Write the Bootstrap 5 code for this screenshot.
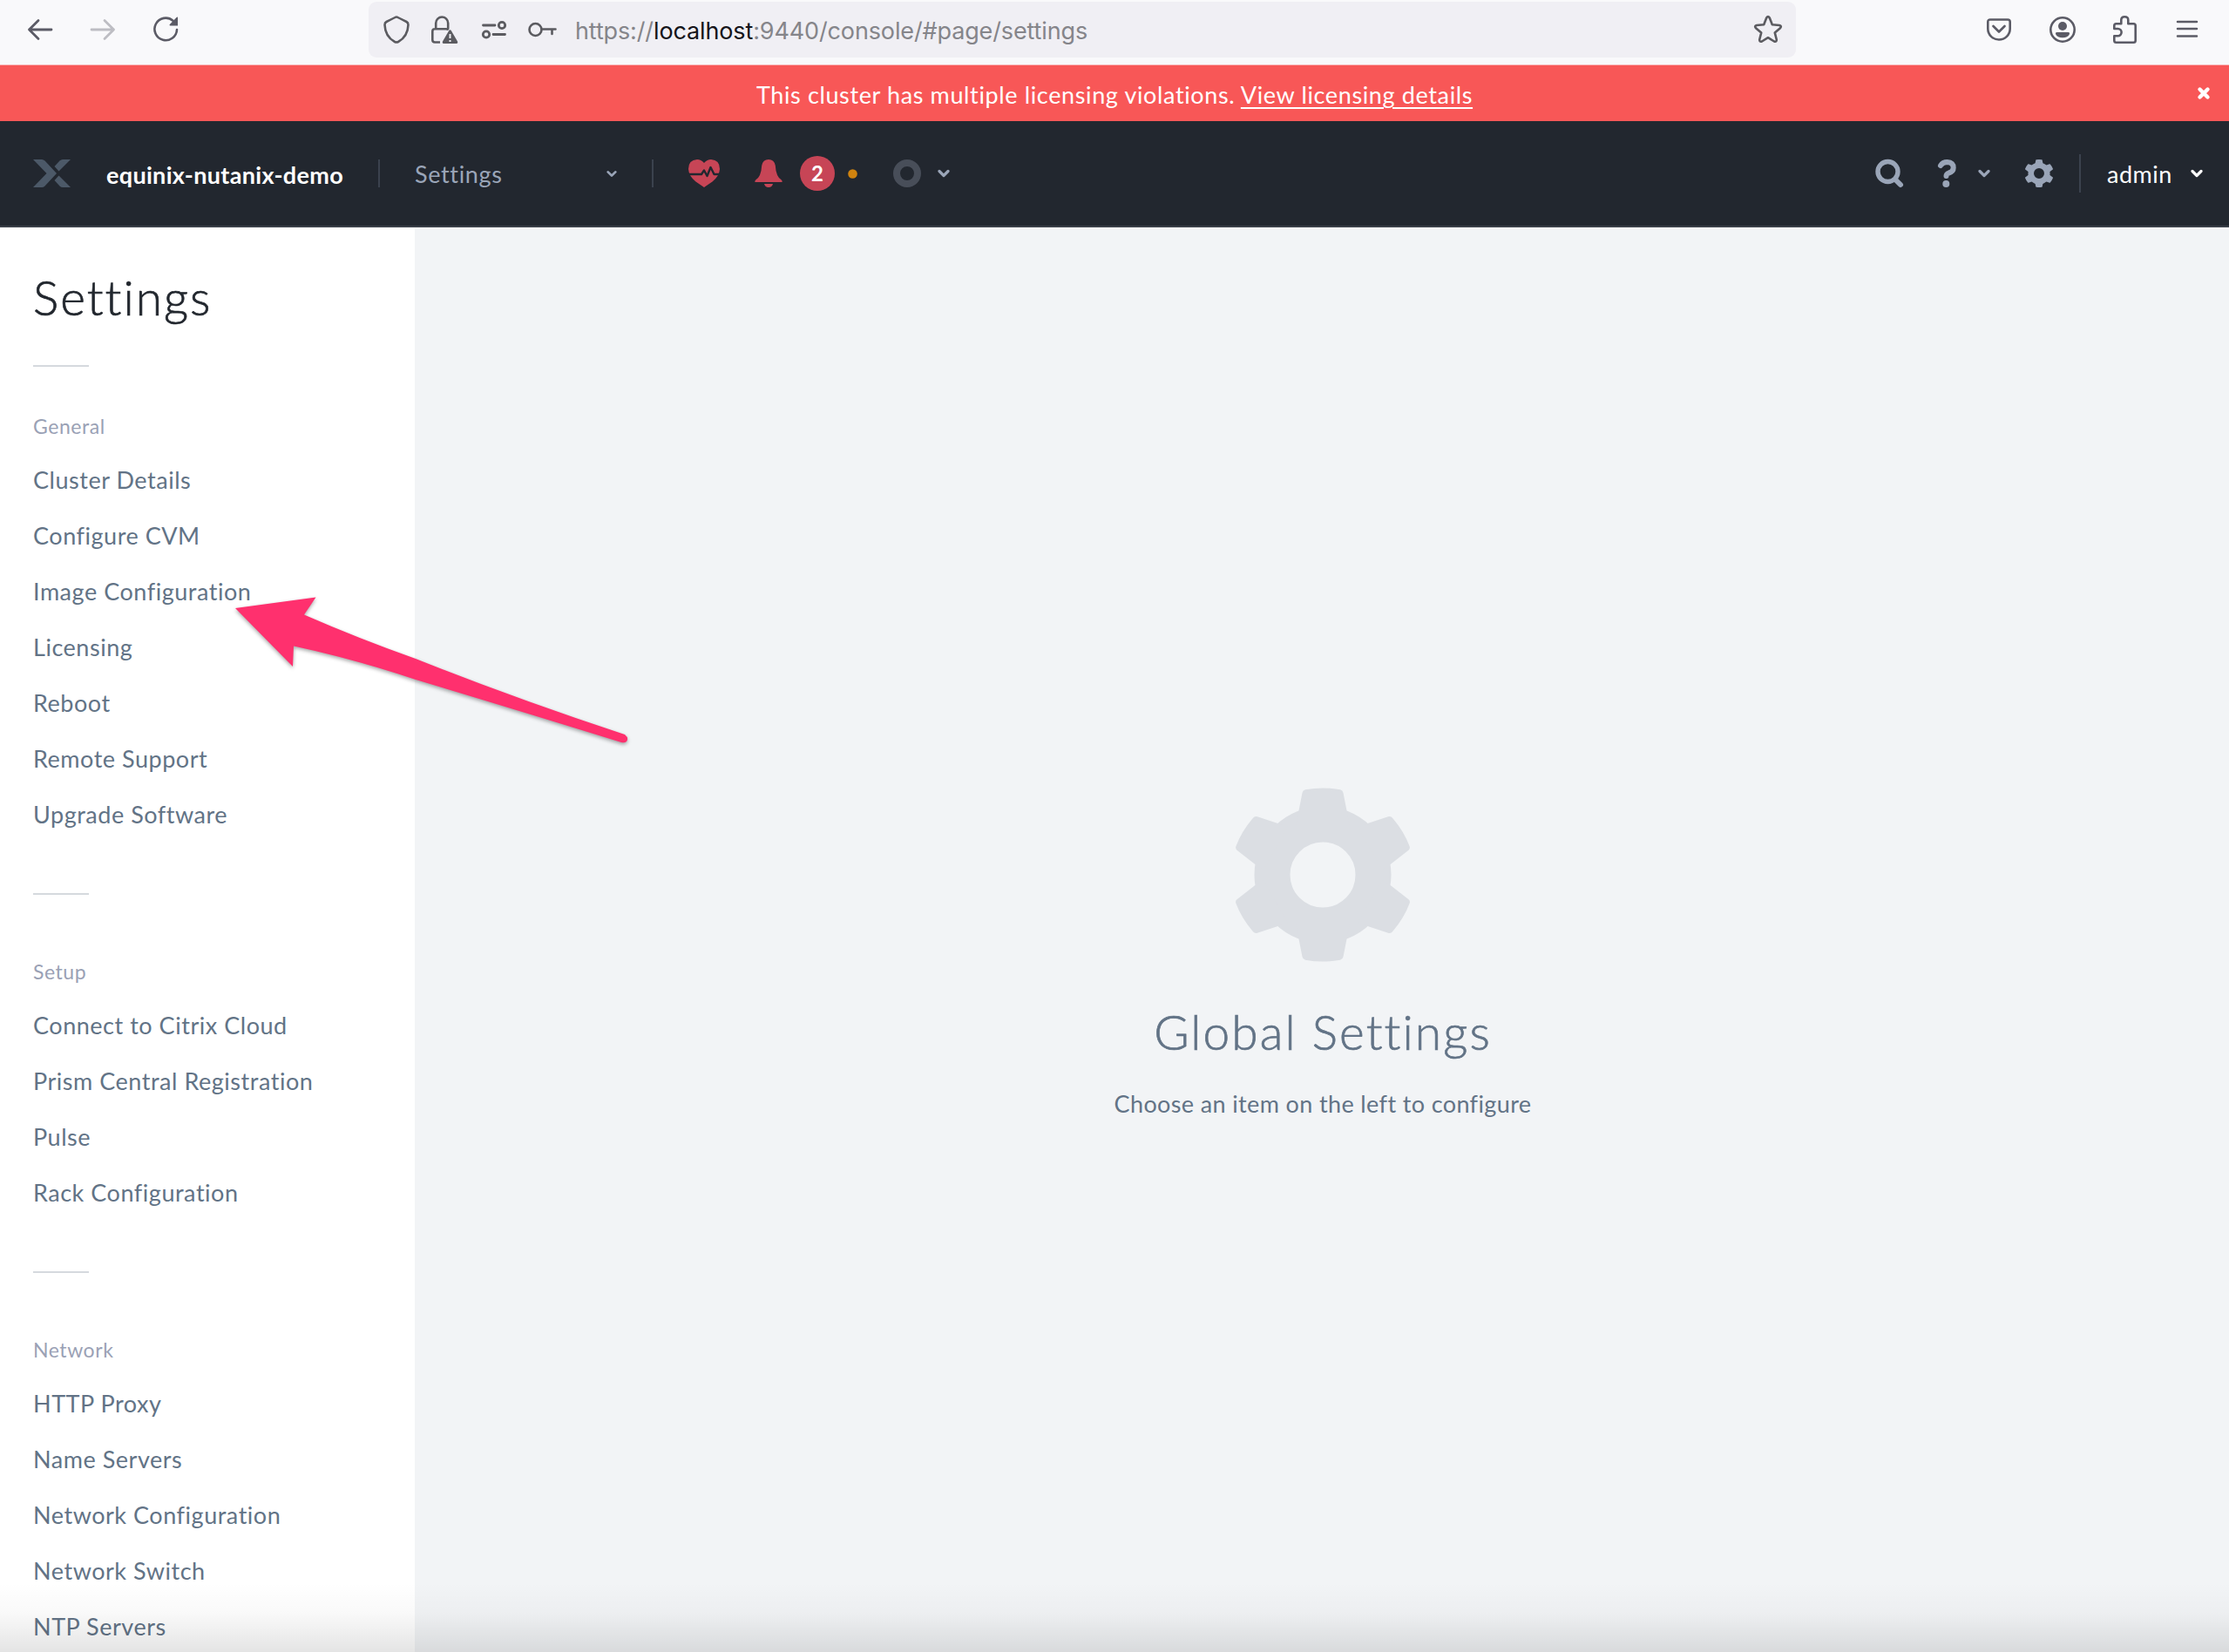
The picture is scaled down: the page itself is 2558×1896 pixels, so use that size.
<!DOCTYPE html>
<html lang="en">
<head>
<meta charset="utf-8">
<meta name="viewport" content="width=device-width, initial-scale=1">
<title>Settings</title>
<link href="https://cdn.jsdelivr.net/npm/bootstrap@5.3.0/dist/css/bootstrap.min.css" rel="stylesheet">
<style>
body{font-family:Lato,"Open Sans",sans-serif;font-size:27px;color:#627386;background:#f2f4f6;height:1896px;overflow:hidden}
svg{display:block;flex:none;overflow:visible}
.browser-bar{height:75px;padding:2px 36px 9px 32px;background:#f9f9fb;color:#5b5b66;border-bottom:1px solid #f9b5b7}
.nav-tools{gap:44px;width:391px}
.url-field{width:1638px;height:64px;border-radius:9px;background:#f0eff4;padding:0 16px 0 17px;color:#5b5b60}
.lock-icon{margin-left:25px}
.sliders-icon{margin-left:27px}
.key-icon{margin-left:25px}
.url-text{font-family:Inter,sans-serif;font-size:27px;color:#85858a;line-height:36px;margin-left:21px;letter-spacing:-.13px;padding-top:4px}
.url-text b{font-weight:400;color:#15141a}
.account-icon{margin-left:44px}
.puzzle-icon{margin-left:43px}
.menu-icon{margin-left:46px}
.violation{height:64px;background:#f85757;color:#fff;line-height:60px;letter-spacing:.63px;padding-top:4px}
.violation a{color:#fff;text-decoration:underline;text-decoration-thickness:1.5px;text-underline-offset:4px}
.violation .dismiss{right:22px;top:25px}
.topbar{height:122px;background:#22272f;border-bottom:2px solid #3a3f48;padding:0 30px 0 38px;color:#9aa5b8}
.cluster-name{color:#fff;font-weight:700;margin-left:41px;width:312px;font-size:27px;letter-spacing:.32px;padding-top:4px}
.rule-v{width:2px;height:32px;background:#3b424e;flex:none}
.rule-tall{height:44px;margin-left:30px}
.page-pick{width:220px;margin-left:40px;padding-top:3px;letter-spacing:.65px}
.gap-40{margin-left:40px}
.alert-count{width:40px;height:40px;background:#c74556;color:#fff;font-weight:700;font-size:24px;margin-left:20px}
.dot-icon{margin-left:15px}
.ring-icon{margin-left:41px}
.ring-chev{margin-left:19px}
.help-chev{margin-left:25px}
.user-name{color:#fff;margin-left:30px;width:96px;padding-top:3px;letter-spacing:.5px}
.workspace{height:1635px;border-top:2px solid #fcfcfd}
.side{width:476px;background:#fff;padding:0 38px;margin-top:-2px}
.side h1,.empty-state h2{font-weight:300;font-size:55px;line-height:64px;-webkit-text-stroke:.7px currentColor}
.side h1{color:#22272e;margin:48px 0 46px;letter-spacing:2px}
.rule-h{width:64px;height:2px;background:#d5d9de}
.group-title{font-size:23px;line-height:32px;color:#9aa1b5;letter-spacing:.55px}
.side li{height:64px;line-height:64px;letter-spacing:.53px;white-space:nowrap}
.side ul{margin:14px 0 58px}
.first-title{margin-top:52px}
.later-title{margin-top:72px}
.empty-state{padding:641px 0 0 2px}
.empty-state h2{margin:48px 0 0;letter-spacing:2.1px}
.empty-state p{line-height:36px;margin:33px 0 0;letter-spacing:.37px}
.pointer-arrow{left:0;top:0;filter:drop-shadow(0 2px 2px rgba(0,0,0,.35))}
.edge-fade{left:0;right:0;top:1816px;height:80px;background:linear-gradient(rgba(0,0,0,0),rgba(0,0,0,.025) 45%,rgba(0,0,0,.105))}
</style>
<script src="https://cdn.jsdelivr.net/npm/bootstrap@5.3.0/dist/js/bootstrap.bundle.min.js"></script>
</head>
<body class="position-relative">
<svg width="0" height="0" class="position-absolute">
  <defs>
    <path id="tooth" d="M-31 -56L-23.500 -94Q-23 -97 -20 -97.700Q0 -101.500 20 -97.700Q23 -97 23.500 -94L31 -56Z"/>
    <path id="side-tooth" d="M40 -55L49.300 -58.300L75 -66.700Q78 -67.700 80 -65.300Q93.500 -49.500 99.700 -32.500Q100.500 -30 98.500 -28.300L78 -12.300L68 -6Z"/>
    <symbol id="gear" viewBox="-100 -100 200 200">
      <circle r="58" fill="none" stroke="currentColor" stroke-width="41"/>
      <g fill="currentColor"><use href="#tooth"/><use href="#tooth" transform="scale(1 -1)"/><use href="#side-tooth"/><use href="#side-tooth" transform="scale(-1 1)"/><use href="#side-tooth" transform="scale(1 -1)"/><use href="#side-tooth" transform="scale(-1 -1)"/></g>
    </symbol>
    <symbol id="chev" viewBox="0 0 14 10"><path d="M2 2.500L7 7.500L12 2.500" fill="none" stroke="currentColor" stroke-width="3.200" stroke-linecap="round" stroke-linejoin="round"/></symbol>
  </defs>
</svg>

<header class="browser-bar d-flex align-items-center">
  <div class="nav-tools d-flex align-items-center">
    <svg width="28" height="24" viewBox="0 0 28 24" fill="none" stroke="currentColor" stroke-width="2.800" stroke-linecap="round" stroke-linejoin="round"><path d="M27 12H1.500M12 1.500L1.500 12L12 22.500"/></svg>
    <svg width="28" height="24" viewBox="0 0 28 24" fill="none" stroke="#bdbdc3" stroke-width="2.800" stroke-linecap="round" stroke-linejoin="round"><path d="M1 12H26.500M16 1.500L26.500 12L16 22.500"/></svg>
    <svg width="29" height="29" viewBox="0 0 29 29"><path d="M27 15A12.800 12.800 0 1 1 22.500 4.700" fill="none" stroke="currentColor" stroke-width="2.600" stroke-linecap="round"/><path d="M28 .5V10.500H19.300Q17.800 10.300 18.800 9L26.500 1Q27.500 .2 28 .5Z" fill="currentColor"/></svg>
  </div>
  <div class="url-field d-flex align-items-center">
    <svg width="30" height="32" viewBox="0 0 30 32" fill="none" stroke="currentColor" stroke-width="2.600" stroke-linejoin="round"><path d="M15 1.500Q16 1.500 26.500 7Q28.500 8 28.500 10.500Q28 24 17 30Q15 31 13 30Q2 24 1.500 10.500Q1.500 8 3.500 7Q14 1.500 15 1.500Z"/></svg>
    <svg class="lock-icon" width="31" height="32" viewBox="0 0 31 32"><path d="M10 30.500H4Q1.300 30.500 1.300 27.800V18Q1.300 15.300 4 15.300H17Q19 15.300 19.600 16.500M5.200 15V8.500A7 7 0 0 1 19.200 8.500V15" fill="none" stroke="currentColor" stroke-width="2.600"/><path d="M20 17.500Q21.500 15 23 17.500L30 29.500Q31 32 28.500 32H14.500Q12 32 13 29.500Z" fill="currentColor"/><path d="M21.500 21V26M21.500 28V30" stroke="#f0eff4" stroke-width="2"/></svg>
    <svg class="sliders-icon" width="28" height="22" viewBox="0 0 28 22" fill="none" stroke="currentColor" stroke-width="2.800" stroke-linecap="round"><path d="M1.500 6H15M13 16.500H26.500"/><circle cx="23" cy="6" r="3.700"/><circle cx="5" cy="16.500" r="3.700"/></svg>
    <svg class="key-icon" width="33" height="18" viewBox="0 0 33 18" fill="none" stroke="currentColor" stroke-width="2.600" stroke-linecap="round" stroke-linejoin="round"><circle cx="8.500" cy="9" r="7"/><path d="M15.500 8.500H31.500M27.500 8.500V14"/></svg>
    <span class="url-text">https://<b>localhost</b>:9440/console/#page/settings</span>
    <svg class="ms-auto" width="32" height="31" viewBox="0 0 32 31" fill="none" stroke="currentColor" stroke-width="2.600" stroke-linejoin="round"><path d="M14.200 2.500Q16 -.2 17.800 2.500L20.800 10.200L29 11Q32 11.800 30 14.200L23.800 19.600L25.800 27.500Q26 30.500 23 29.500L16 25.200L9 29.500Q6 30.500 6.200 27.500L8.200 19.600L2 14.200Q0 11.800 3 11L11.200 10.200Z"/></svg>
  </div>
  <svg class="ms-auto" width="28" height="26" viewBox="0 0 28 26" fill="none" stroke="currentColor" stroke-width="2.600" stroke-linecap="round" stroke-linejoin="round"><path d="M4 1.500H24Q26.700 1.500 26.700 4V12A12.700 12.500 0 0 1 1.300 12V4Q1.300 1.500 4 1.500Z"/><path d="M7.500 9L14 15.500L20.500 9"/></svg>
  <svg class="account-icon" width="30" height="30" viewBox="0 0 30 30"><circle cx="15" cy="15" r="13.700" fill="none" stroke="currentColor" stroke-width="2.600"/><circle cx="15" cy="11" r="5" fill="currentColor"/><path d="M8.500 18H21.500Q23.500 18 23 20A8.500 6.500 0 0 1 7 20Q6.500 18 8.500 18Z" fill="currentColor"/></svg>
  <svg class="puzzle-icon" width="27" height="32" viewBox="0 0 27 32" fill="none" stroke="currentColor" stroke-width="2.600" stroke-linejoin="round"><path d="M1.300 15V11.500Q1.300 9.300 3.500 9.300H9.300V5Q9.300 1.300 13.200 1.300Q17.300 1.300 17.300 5V9.300H23.500Q25.700 9.300 25.700 11.500V28.500Q25.700 30.700 23.500 30.700H3.500Q1.300 30.700 1.300 28.500V23.200H5.500A4.100 4.100 0 0 0 5.500 15Z"/></svg>
  <svg class="menu-icon" width="24" height="20" viewBox="0 0 24 20" stroke="currentColor" stroke-width="2.500" stroke-linecap="round"><path d="M1 1H23M1 9H23M1 17.500H23"/></svg>
</header>

<div class="violation position-relative text-center">This cluster has multiple licensing violations. <a href="#">View licensing details</a>
  <svg class="dismiss position-absolute" width="14" height="14" viewBox="0 0 14 14" stroke="#fff" stroke-width="4.400" stroke-linecap="round"><path d="M2.500 2.500L11.500 11.500M11.500 2.500L2.500 11.500"/></svg>
</div>

<nav class="topbar d-flex align-items-center">
  <svg width="43" height="32" viewBox="0 0 43 32" fill="#4c5968"><path d="M0 0H10Q12 0 13.500 1.500L27 16L13.500 30.500Q12 32 10 32H0L15.500 16Z"/><path d="M43 0H34Q32 0 30.500 1.500L24.500 8L29.500 13.500Z"/><path d="M43 32H34Q32 32 30.500 30.500L24.500 24L29.500 18.500Z"/></svg>
  <span class="cluster-name">equinix-nutanix-demo</span>
  <span class="rule-v"></span>
  <span class="page-pick">Settings</span>
  <svg width="12" height="9"><use href="#chev"/></svg>
  <span class="rule-v gap-40"></span>
  <svg class="gap-40" width="36" height="32" viewBox="0 0 36 32"><path d="M18 4Q21.500 0 26 0Q36 .5 36 11Q35.500 19 27.500 25.500L18 32L8.500 25.500Q.5 19 0 11Q0 .5 10 0Q14.500 0 18 4Z" fill="#c74556"/><path d="M0 17H15L18 12.500L21.500 19L25.500 9L29.500 17H36" fill="none" stroke="#22272f" stroke-width="2.400" stroke-linejoin="round"/></svg>
  <svg class="gap-40" width="32" height="32" viewBox="0 0 32 32" fill="#c74556"><path d="M16 0Q22.500 0 23.800 7Q24.500 20 31 23.800Q32.500 26 31 26H1Q-.5 26 1 23.800Q7.500 20 8.200 7Q9.500 0 16 0ZM11 28H21Q20 32 16 32Q12 32 11 28Z"/></svg>
  <span class="alert-count rounded-circle d-flex align-items-center justify-content-center">2</span>
  <svg class="dot-icon" width="11" height="11" viewBox="0 0 11 11"><circle cx="5.500" cy="5.500" r="5.300" fill="#d0830f"/></svg>
  <svg class="ring-icon" width="32" height="32" viewBox="0 0 32 32"><circle cx="16" cy="16" r="12" fill="none" stroke="#484e59" stroke-width="8"/></svg>
  <svg class="ring-chev" width="14" height="10"><use href="#chev"/></svg>

  <svg class="ms-auto" width="32" height="32" viewBox="0 0 32 32" fill="none" stroke="currentColor" stroke-linecap="round"><circle cx="14.500" cy="14" r="11.500" stroke-width="5.400"/><path d="M23.500 23.500L29 29" stroke-width="6"/></svg>
  <svg class="gap-40" width="21" height="32" viewBox="0 0 21 32"><path d="M3 7Q5.500 3 10.500 3Q17.700 3.500 17.700 9.500Q17.700 14 12.500 15.500Q9.500 16.500 9.500 19" fill="none" stroke="currentColor" stroke-width="6" stroke-linecap="round" stroke-linejoin="round"/><circle cx="9.300" cy="28" r="4" fill="currentColor"/></svg>
  <svg class="help-chev" width="14" height="10"><use href="#chev"/></svg>
  <svg class="gap-40" width="32" height="32"><use href="#gear"/></svg>
  <span class="rule-v rule-tall"></span>
  <span class="user-name">admin</span>
  <svg width="14" height="10" color="#fff"><use href="#chev"/></svg>
</nav>

<main class="workspace d-flex">
  <aside class="side flex-shrink-0">
    <h1>Settings</h1>
    <div class="rule-h"></div>
    <div class="group-title first-title">General</div>
    <ul class="list-unstyled">
      <li>Cluster Details</li><li>Configure CVM</li><li>Image Configuration</li><li>Licensing</li><li>Reboot</li><li>Remote Support</li><li>Upgrade Software</li>
    </ul>
    <div class="rule-h"></div>
    <div class="group-title later-title">Setup</div>
    <ul class="list-unstyled">
      <li>Connect to Citrix Cloud</li><li>Prism Central Registration</li><li>Pulse</li><li>Rack Configuration</li>
    </ul>
    <div class="rule-h"></div>
    <div class="group-title later-title">Network</div>
    <ul class="list-unstyled mb-0">
      <li>HTTP Proxy</li><li>Name Servers</li><li>Network Configuration</li><li>Network Switch</li><li>NTP Servers</li>
    </ul>
  </aside>
  <section class="empty-state flex-grow-1 d-flex flex-column align-items-center">
    <svg width="200" height="200" color="#dbdee3"><use href="#gear"/></svg>
    <h2>Global Settings</h2>
    <p>Choose an item on the left to configure</p>
  </section>
</main>

<svg class="pointer-arrow position-absolute" width="740" height="880" viewBox="0 0 740 880"><path d="M270 698L362.500 685.500L349 705.500Q412 733 477 756Q590 801 717 843Q722 847 719 851Q717 853 713 852Q600 817 477 780Q405 756 337 741.500L336 765Z" fill="#ff306e"/></svg>
<div class="edge-fade position-absolute"></div>
</body>
</html>
